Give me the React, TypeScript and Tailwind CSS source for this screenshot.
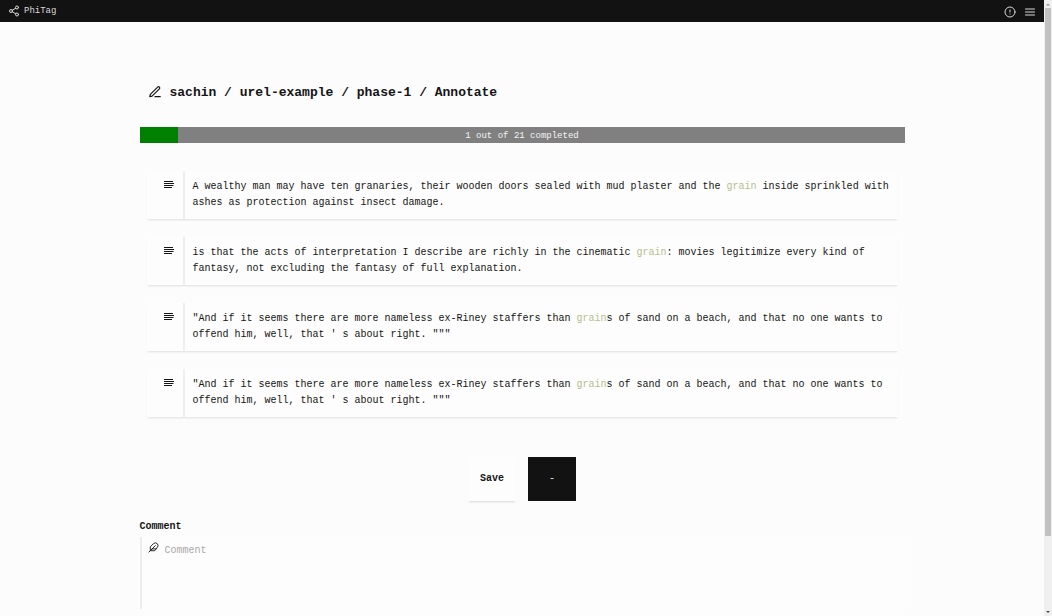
import { FiAlertCircle, FiEdit3, FiFeather, FiMenu, FiShare2 } from "react-icons/fi";

type Usage = { before: string; target: string; after: string };

const usages: Usage[] = [
  {
    before: "A wealthy man may have ten granaries, their wooden doors sealed with mud plaster and the ",
    target: "grain",
    after: " inside sprinkled with ashes as protection against insect damage.",
  },
  {
    before: "is that the acts of interpretation I describe are richly in the cinematic ",
    target: "grain",
    after: ": movies legitimize every kind of fantasy, not excluding the fantasy of full explanation.",
  },
  {
    before: '"And if it seems there are more nameless ex-Riney staffers than ',
    target: "grain",
    after: 's of sand on a beach, and that no one wants to offend him, well, that \' s about right. """',
  },
  {
    before: '"And if it seems there are more nameless ex-Riney staffers than ',
    target: "grain",
    after: 's of sand on a beach, and that no one wants to offend him, well, that \' s about right. """',
  },
];

const done = 1;
const total = 21;

function AlignLeftIcon() {
  return (
    <svg viewBox="0 0 12 12" className="size-3" fill="none" stroke="currentColor" strokeWidth="1">
      <path d="M1 2.5H10M1 4.5H11M1 6.5H10.5M1 8.5H9" />
    </svg>
  );
}

function UsageCard({ usage }: { usage: Usage }) {
  return (
    <li className="flex min-h-12 bg-[#fdfdfd] shadow-[0_2px_2px_-1px_#dfdfdf]">
      <div className="flex w-[38px] shrink-0 justify-end border-r-2 border-[#efefef] pt-2 pr-2">
        <AlignLeftIcon />
      </div>
      <p className="min-w-0 flex-1 py-2 pr-1 pl-2 leading-4">
        {usage.before}
        <span className="text-[#b4bf8c]">{usage.target}</span>
        {usage.after}
      </p>
    </li>
  );
}

function ScrollTrack() {
  return (
    <div aria-hidden="true" className="flex w-2 shrink-0 flex-col items-center bg-[#f0f0f0]">
      <svg viewBox="0 0 8 8" className="size-2 shrink-0">
        <path d="M2 5.5 4 3.5 6 5.5Z" fill="#8a8a8a" />
      </svg>
      <div className="flex w-full flex-1 flex-col px-px">
        <div className="h-[88%] bg-[#c1c1c1]" />
      </div>
      <svg viewBox="0 0 8 8" className="size-2 shrink-0">
        <path d="M2 3 4 5 6 3Z" fill="#444" />
      </svg>
    </div>
  );
}

export default function App() {
  return (
    <div className="flex h-screen overflow-hidden bg-[#fcfcfc] font-['Liberation_Mono',monospace] text-[10px] font-medium text-[#151515]">
      <div className="min-w-0 flex-1 overflow-hidden">
        <header className="flex h-[22px] items-center justify-between bg-[#121212] px-2 text-[#d8d8d8]">
          <a href="#home" className="flex items-center gap-1 text-[9px]">
            <FiShare2 className="size-3" />
            <span className="pt-0.5">PhiTag</span>
          </a>
          <nav className="flex items-center gap-2 pt-0.5">
            <button type="button" aria-label="Information">
              <FiAlertCircle className="size-3" />
            </button>
            <button type="button" aria-label="Menu">
              <FiMenu className="size-3" />
            </button>
          </nav>
        </header>

        <main className="mx-auto w-full max-w-[765px] pt-15">
          <h1 className="flex h-5 items-center gap-2 pl-2 text-[13px] font-bold whitespace-pre">
            <FiEdit3 className="size-3.5" />
            <span className="pt-0.5">sachin / urel-example / phase-1 / Annotate</span>
          </h1>

          <div className="mt-[25px] grid h-4 bg-[#808080] text-[9px] text-[#f4f4f4]">
            <div className="col-start-1 row-start-1 w-[5%] bg-[#008000]" />
            <span className="col-start-1 row-start-1 pt-0.5 text-center leading-[14px]">
              {done} out of {total} completed
            </span>
          </div>

          <ul className="mt-7 flex flex-col gap-[18px] px-[7px]">
            {usages.map((usage, i) => (
              <UsageCard key={i} usage={usage} />
            ))}
          </ul>

          <div className="mt-10 flex justify-center gap-3">
            <button
              type="button"
              className="h-11 w-12 bg-[#fdfdfd] pb-0.5 font-bold shadow-[0_2px_2px_-1px_#d8d8d8]"
            >
              Save
            </button>
            <button type="button" className="h-11 w-12 bg-[#121212] pb-0.5 text-[#e8e8e8]">
              -
            </button>
          </div>

          <label htmlFor="comment" className="mt-[18px] block h-4 leading-4 font-bold">
            Comment
          </label>
          <div className="mt-0.5 flex h-[72px] gap-1.5 border-l-2 border-[#ededed] bg-[#fdfdfd] pt-1 pl-1.5">
            <FiFeather className="mt-px size-[11px] shrink-0" />
            <textarea
              id="comment"
              placeholder="Comment"
              className="min-w-0 flex-1 resize-none bg-transparent pt-0.5 leading-4 outline-none placeholder:text-[#a9a9a9]"
            />
          </div>
        </main>
      </div>
      <ScrollTrack />
    </div>
  );
}
